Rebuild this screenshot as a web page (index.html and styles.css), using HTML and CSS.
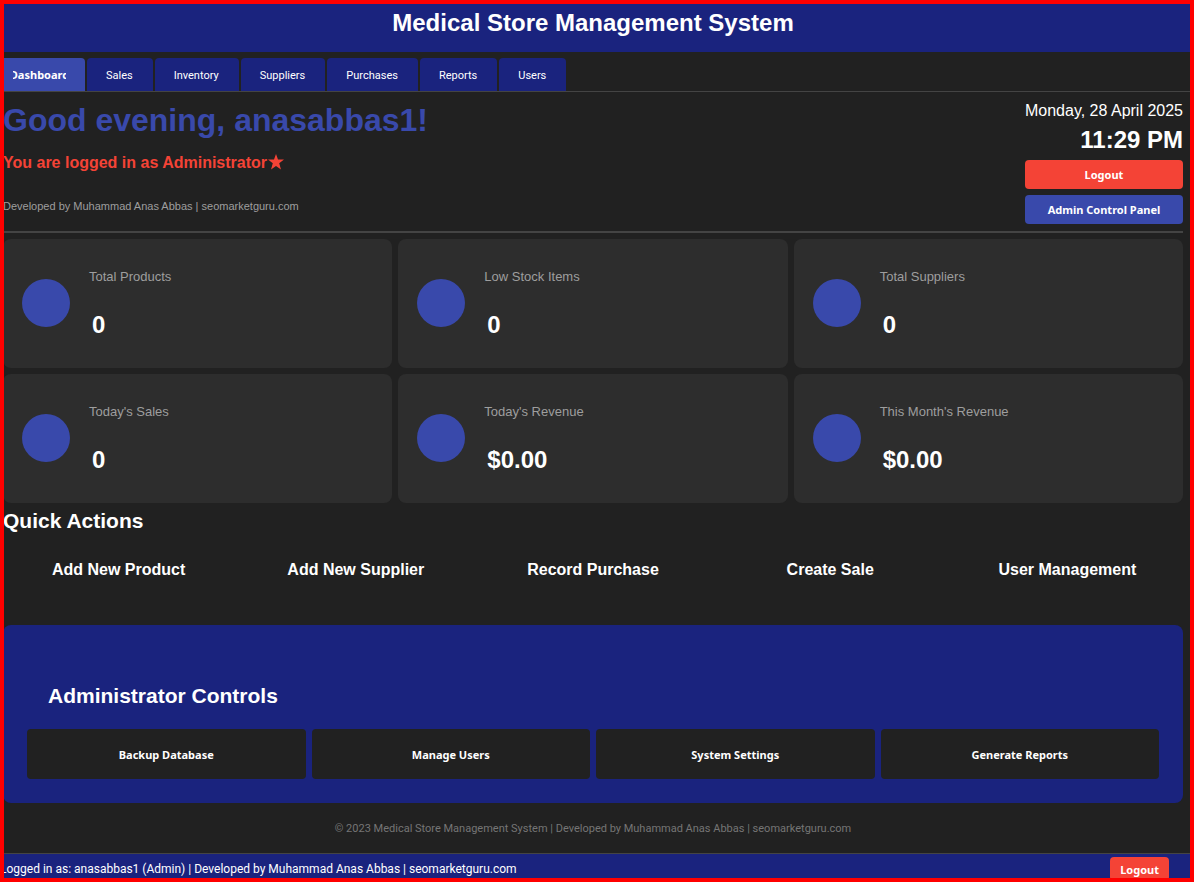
FILE: index.html
```html
<!DOCTYPE html>
<html lang="en">
<head>
    <meta charset="UTF-8">
    <meta name="viewport" content="width=device-width, initial-scale=1.0">
    <title>Medical Store Management System</title>
    <link rel="stylesheet" href="styles.css">
</head>
<body>
    <header class="app-header">
        <h1>Medical Store Management System</h1>
    </header>

    <nav class="tabs">
        <button class="tab active"><span class="tab-label">Dashboard</span></button>
        <button class="tab">Sales</button>
        <button class="tab">Inventory</button>
        <button class="tab">Suppliers</button>
        <button class="tab">Purchases</button>
        <button class="tab">Reports</button>
        <button class="tab">Users</button>
    </nav>

    <main class="content">
        <section class="welcome">
            <div class="welcome-text">
                <h2 class="greeting">Good evening, anasabbas1!</h2>
                <p class="role">You are logged in as Administrator<svg class="star" viewBox="0 0 16 16" aria-hidden="true"><path d="M8 0l2 5.600h6l-4.800 3.700L13 15.500 8 12l-5 3.500 1.800-6.200L0 5.600h6z"/></svg></p>
                <p class="credit">Developed by Muhammad Anas Abbas | seomarketguru.com</p>
            </div>
            <div class="session">
                <div class="date">Monday, 28 April 2025</div>
                <div class="time">11:29 PM</div>
                <button class="btn btn-danger">Logout</button>
                <button class="btn btn-primary">Admin Control Panel</button>
            </div>
        </section>

        <section class="stats">
            <div class="card">
                <div class="card-icon"></div>
                <div>
                    <div class="card-label">Total Products</div>
                    <div class="card-value">0</div>
                </div>
            </div>
            <div class="card">
                <div class="card-icon"></div>
                <div>
                    <div class="card-label">Low Stock Items</div>
                    <div class="card-value">0</div>
                </div>
            </div>
            <div class="card">
                <div class="card-icon"></div>
                <div>
                    <div class="card-label">Total Suppliers</div>
                    <div class="card-value">0</div>
                </div>
            </div>
            <div class="card">
                <div class="card-icon"></div>
                <div>
                    <div class="card-label">Today's Sales</div>
                    <div class="card-value">0</div>
                </div>
            </div>
            <div class="card">
                <div class="card-icon"></div>
                <div>
                    <div class="card-label">Today's Revenue</div>
                    <div class="card-value">$0.00</div>
                </div>
            </div>
            <div class="card">
                <div class="card-icon"></div>
                <div>
                    <div class="card-label">This Month's Revenue</div>
                    <div class="card-value">$0.00</div>
                </div>
            </div>
        </section>

        <h2 class="section-title">Quick Actions</h2>
        <section class="quick-actions">
            <button class="action">Add New Product</button>
            <button class="action">Add New Supplier</button>
            <button class="action">Record Purchase</button>
            <button class="action">Create Sale</button>
            <button class="action">User Management</button>
        </section>

        <section class="admin-panel">
            <h2 class="section-title">Administrator Controls</h2>
            <div class="admin-buttons">
                <button class="btn btn-dark">Backup Database</button>
                <button class="btn btn-dark">Manage Users</button>
                <button class="btn btn-dark">System Settings</button>
                <button class="btn btn-dark">Generate Reports</button>
            </div>
        </section>

        <p class="copyright">© 2023 Medical Store Management System | Developed by Muhammad Anas Abbas | seomarketguru.com</p>
    </main>

    <footer class="status-bar">
        <span>Logged in as: anasabbas1 (Admin) | Developed by Muhammad Anas Abbas | seomarketguru.com</span>
        <button class="btn btn-danger">Logout</button>
    </footer>
</body>
</html>
```

FILE: styles.css
```css
* {
    box-sizing: border-box;
    margin: 0;
    padding: 0;
}
body {
    height: 100vh;
    overflow: hidden;
    background: #212121;
    color: #fff;
    font-family: "Liberation Sans", Arial, sans-serif;
}
/* red window frame, drawn over the content */
body::after {
    content: "";
    position: fixed;
    inset: 0;
    border: 4px solid #f00;
    pointer-events: none;
}
button {
    border: none;
    color: #fff;
    cursor: pointer;
    font-family: Tahoma, "Noto Sans", sans-serif;
    font-size: 11px;
}
.app-header {
    height: 52px;
    padding: 8px 8px 0 0;
    background: #1a237e;
    text-align: center;
}
.app-header h1 {
    font-size: 24px;
    line-height: 30px;
}

/* tabs */
.tabs {
    display: flex;
    gap: 2px;
    padding-top: 6px;
    border-bottom: 1px solid #444;
}
.tab {
    height: 33px;
    padding: 2px 20px 0 19px;
    border-radius: 4px 4px 0 0;
    background: #1a237e;
    font-family: Tahoma, Roboto, sans-serif;
}
.tab.active {
    width: 85px;
    padding: 0 19px 0 13px;
    background: #3949ab;
    font-family: Tahoma, "Noto Sans", sans-serif;
    font-weight: bold;
}
.tab-label {
    display: flex;
    justify-content: center;
    overflow: hidden;
}

/* dashboard */
.content {
    padding: 8px 11px 0 3px;
}
.welcome {
    display: flex;
    justify-content: space-between;
    padding-bottom: 7px;
    border-bottom: 2px solid #444;
}
.greeting {
    color: #3949ab;
    font-size: 32px;
    line-height: 40px;
}
.role {
    margin-top: 13px;
    color: #f44336;
    font-size: 16px;
    font-weight: bold;
    line-height: 20px;
}
.star {
    width: 16px;
    height: 16px;
    margin-left: 1px;
    fill: #f44336;
    vertical-align: -2px;
}
.credit {
    margin-top: 25px;
    color: #9e9e9e;
    font-size: 11px;
    line-height: 16px;
}
.session {
    display: flex;
    flex-direction: column;
}
.date {
    font-size: 16px;
    line-height: 22px;
}
.time {
    margin: 4px 0 6px;
    font-size: 24px;
    font-weight: bold;
    line-height: 28px;
    text-align: right;
}
.btn {
    height: 29px;
    border-radius: 4px;
    font-weight: bold;
}
.session .btn + .btn {
    margin-top: 6px;
}
.btn-danger {
    background: #f44336;
}
.btn-primary {
    background: #3949ab;
}
.btn-dark {
    height: 50px;
    background: #212121;
}

.stats {
    display: grid;
    grid-template-columns: repeat(3, 1fr);
    gap: 6px;
    margin-top: 6px;
}
.card {
    display: flex;
    align-items: center;
    gap: 19px;
    height: 129px;
    padding: 0 19px 1px;
    border-radius: 8px;
    background: #2d2d2d;
}
.card-icon {
    width: 48px;
    height: 48px;
    border-radius: 50%;
    background: #3949ab;
}
.card-label {
    color: #9e9e9e;
    font-size: 13px;
    line-height: 20px;
}
.card-value {
    margin-top: 24px;
    padding-left: 3px;
    font-size: 24px;
    font-weight: bold;
    line-height: 28px;
}

.section-title {
    font-size: 21px;
    line-height: 24px;
}
.content > .section-title {
    margin-top: 6px;
}
.quick-actions {
    display: grid;
    grid-template-columns: repeat(5, 1fr);
    gap: 6px;
    margin-top: 6px;
}
.action {
    height: 62px;
    background: none;
    font-family: inherit;
    font-size: 16px;
    font-weight: bold;
}

.admin-panel {
    margin-top: 24px;
    padding: 59px 24px 24px;
    border-radius: 8px;
    background: #1a237e;
}
.admin-panel .section-title {
    padding-left: 21px;
}
.admin-buttons {
    display: grid;
    grid-template-columns: repeat(4, 1fr);
    gap: 6px;
    margin-top: 21px;
}
.copyright {
    padding: 18px 0 16px;
    color: #757575;
    font-family: Tahoma, Roboto, sans-serif;
    font-size: 11px;
    line-height: 16px;
    text-align: center;
}
.status-bar {
    display: flex;
    justify-content: space-between;
    padding: 3px 25px 0 0;
    border-top: 1px solid #444;
    background: #1a237e;
    font-family: Tahoma, Roboto, sans-serif;
    font-size: 12px;
    line-height: 24px;
}
.status-bar .btn {
    height: 24px;
    padding: 0 10px;
}
```
